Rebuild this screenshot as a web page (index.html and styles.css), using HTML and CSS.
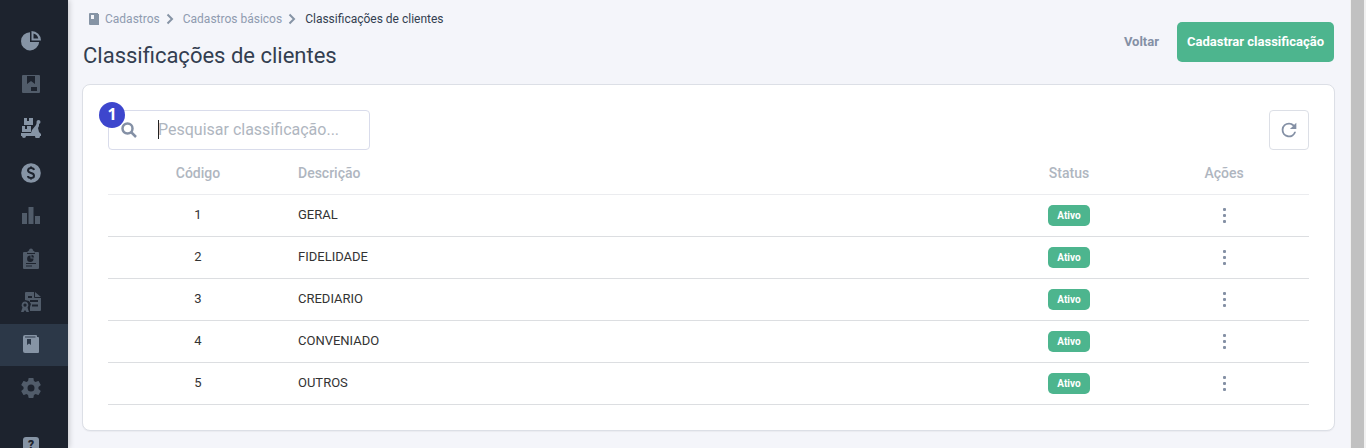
FILE: index.html
```html
<!DOCTYPE html>
<html lang="pt-BR">
<head>
    <meta charset="UTF-8">
    <meta name="viewport" content="width=device-width, initial-scale=1.0">
    <title>Classificações de clientes</title>
    <link rel="stylesheet" href="styles.css">
</head>
<body>
    <nav class="sidebar" aria-label="Menu principal">
        <div class="menu-group">
            <a href="#" class="menu-item bright" aria-label="Dashboard">
                <svg width="22" height="22" viewBox="0 0 22 22"><path d="M10 2.200V12h9.200A9.100 9.100 0 1 1 10 2.200Z"/><path fill-rule="evenodd" d="M11.500 1a9.500 9.500 0 0 1 9.500 9.500h-9.500ZM13.500 3.500V8.500h4.800a6.500 6.500 0 0 0-4.800-5Z"/></svg>
            </a>
            <a href="#" class="menu-item" aria-label="Produtos">
                <svg width="22" height="22" viewBox="0 0 22 22"><path fill-rule="evenodd" d="M3 2h16q1 0 1 1v16q0 1-1 1H3q-1 0-1-1V3q0-1 1-1ZM7 3v8l4-3 4 3V3ZM11 14v4h6v-4Z"/></svg>
            </a>
            <a href="#" class="menu-item bright" aria-label="Entregas">
                <svg width="22" height="22" viewBox="0 0 22 22"><path d="M4 2h3v3h2V2h4v7H4ZM2 10h3v3h2v-3h4v6H2ZM1 17h10l1-3 4-5 1-3h2v4l-1 2 1 4 2 2v2h-1a2.500 2.500 0 0 1-5 0H6a2 2 0 0 1-4 0H1Z"/><circle cx="18.500" cy="6" r="2"/></svg>
            </a>
        </div>
        <div class="menu-group">
            <a href="#" class="menu-item bright" aria-label="Financeiro">
                <svg width="22" height="22" viewBox="0 0 22 22"><circle cx="11" cy="11" r="9.800"/><path class="cut-line" d="M14 8q-.4-2-3-2T8 8.300Q8 10.300 11 11t3 2.700Q14 16 11 16t-3-2M11 4.500v2M11 15.500v2"/></svg>
            </a>
            <a href="#" class="menu-item" aria-label="Relatórios">
                <svg width="22" height="22" viewBox="0 0 22 22"><path d="M2 8h5v11H2ZM8.500 2h5v17h-5ZM15 11h5v8h-5Z"/></svg>
            </a>
            <a href="#" class="menu-item" aria-label="Análises">
                <svg width="22" height="22" viewBox="0 0 22 22"><path d="M4 4h3v2h8V4h3q1 0 1 1v15q0 1-1 1H4q-1 0-1-1V5q0-1 1-1Z"/><path d="M7 5q0-2 2-2.500a2 2 0 0 1 4 0q2 .5 2 2.500Z"/><path class="cut" d="M10.500 7.500v3h3a3.200 3.200 0 1 1-3-3ZM11.500 6.800a3 3 0 0 1 2.700 2.700h-2.700Z"/><path class="cut-thin" d="M6 15.500h10M6 18h6"/></svg>
            </a>
            <a href="#" class="menu-item" aria-label="Fiscal">
                <svg width="22" height="22" viewBox="0 0 22 22"><path d="M6 1h8v5q0 1 1 1h6v12q0 1-1 1H10V16l1-3-2-3-4-1V2q0-1 1-1ZM15 1l6 5h-6Z"/><path class="cut-line" d="M8 6h4M10 10h8M12 14.500h6"/><path fill-rule="evenodd" d="M5 10.500a3.600 3.600 0 0 1 2.500 6L9 21H6.500L5 19l-1.500 2H1l1.500-4.500A3.600 3.600 0 0 1 5 10.500ZM5 12.500a1.600 1.600 0 1 0 .01 0Z"/></svg>
            </a>
            <a href="#" class="menu-item active" aria-label="Cadastros" aria-current="page">
                <svg width="22" height="22" viewBox="0 0 22 22"><path fill-rule="evenodd" d="M5 1h11q1 0 1 1v1h1q1 0 1 1v14q0 1-1 1H5q-2 0-2-2V3q0-2 2-2ZM5 2.500v1h10.500v-1ZM7 5v6l2-1.500L11 11V5Z"/></svg>
            </a>
            <a href="#" class="menu-item" aria-label="Configurações">
                <svg width="24" height="24" viewBox="0 0 24 24"><path d="m19.400 13 .1-1-.1-1 2.200-1.700c.2-.1.200-.4.100-.6l-2-3.500c-.1-.2-.4-.3-.6-.2l-2.500 1-1.700-1-.4-2.600c0-.2-.2-.4-.5-.4h-4c-.2 0-.5.200-.5.4L9.100 5 7.400 6 5 5c-.3-.1-.5 0-.7.200l-2 3.500c-.1.200 0 .4.200.6L4.600 11l-.1 1 .1 1-2.100 1.700c-.2.100-.3.400-.2.600l2 3.500c.2.200.4.300.7.200l2.400-1 1.700 1 .4 2.600c0 .2.300.4.500.4h4c.3 0 .5-.2.500-.4l.4-2.600 1.700-1 2.500 1c.2.100.5 0 .6-.2l2-3.500c.1-.2.100-.5-.1-.6ZM12 15.500a3.500 3.500 0 1 1 0-7 3.500 3.500 0 0 1 0 7Z"/></svg>
            </a>
        </div>
        <div class="menu-group menu-help">
            <a href="#" class="menu-item bright" aria-label="Ajuda"><span class="help-icon">?</span></a>
        </div>
    </nav>

    <main class="content">
        <header class="page-header">
            <div>
                <nav class="breadcrumb" aria-label="Você está em">
                    <a href="#">
                        <svg width="12" height="12" viewBox="0 0 12 12"><path fill-rule="evenodd" d="M2 0h8v1h1v11H2q-1 0-1-1V1q0-1 1-1ZM3 2v4h3V2Z"/></svg>
                        Cadastros</a>
                    <svg class="chevron" width="8" height="12" viewBox="0 0 8 12"><path d="m1.500 1.500 4.500 4.500-4.500 4.500"/></svg>
                    <a href="#">Cadastros básicos</a>
                    <svg class="chevron" width="8" height="12" viewBox="0 0 8 12"><path d="m1.500 1.500 4.500 4.500-4.500 4.500"/></svg>
                    <span>Classificações de clientes</span>
                </nav>
                <h1>Classificações de clientes</h1>
            </div>
            <div class="actions">
                <button type="button" class="btn-link">Voltar</button>
                <button type="button" class="btn-primary">Cadastrar classificação</button>
            </div>
        </header>

        <section class="card">
            <div class="toolbar">
                <div class="search">
                    <span class="step-badge">1</span>
                    <svg class="search-icon" width="16" height="16" viewBox="0 0 16 16"><circle cx="6.500" cy="6.500" r="5"/><path d="m10 10 5 5"/></svg>
                    <span class="caret"></span>
                    <input type="text" id="search" placeholder="Pesquisar classificação..." aria-label="Pesquisar classificação">
                </div>
                <button type="button" class="btn-refresh" aria-label="Atualizar">
                    <svg width="22" height="22" viewBox="0 0 24 24"><path d="M17.650 6.350A7.960 7.960 0 0 0 12 4a8 8 0 1 0 7.730 10h-2.080A6 6 0 1 1 12 6c1.660 0 3.140.69 4.220 1.780L13 11h7V4z"/></svg>
                </button>
            </div>

            <table>
                <thead>
                    <tr>
                        <th class="col-code">Código</th>
                        <th class="col-desc">Descrição</th>
                        <th class="col-status">Status</th>
                        <th class="col-actions">Ações</th>
                    </tr>
                </thead>
                <tbody>
                    <tr>
                        <td class="col-code">1</td>
                        <td class="col-desc">GERAL</td>
                        <td class="col-status"><span class="status">Ativo</span></td>
                        <td class="col-actions"><button type="button" class="btn-more" aria-label="Ações de GERAL"><i></i><i></i><i></i></button></td>
                    </tr>
                    <tr>
                        <td class="col-code">2</td>
                        <td class="col-desc">FIDELIDADE</td>
                        <td class="col-status"><span class="status">Ativo</span></td>
                        <td class="col-actions"><button type="button" class="btn-more" aria-label="Ações de FIDELIDADE"><i></i><i></i><i></i></button></td>
                    </tr>
                    <tr>
                        <td class="col-code">3</td>
                        <td class="col-desc">CREDIARIO</td>
                        <td class="col-status"><span class="status">Ativo</span></td>
                        <td class="col-actions"><button type="button" class="btn-more" aria-label="Ações de CREDIARIO"><i></i><i></i><i></i></button></td>
                    </tr>
                    <tr>
                        <td class="col-code">4</td>
                        <td class="col-desc">CONVENIADO</td>
                        <td class="col-status"><span class="status">Ativo</span></td>
                        <td class="col-actions"><button type="button" class="btn-more" aria-label="Ações de CONVENIADO"><i></i><i></i><i></i></button></td>
                    </tr>
                    <tr>
                        <td class="col-code">5</td>
                        <td class="col-desc">OUTROS</td>
                        <td class="col-status"><span class="status">Ativo</span></td>
                        <td class="col-actions"><button type="button" class="btn-more" aria-label="Ações de OUTROS"><i></i><i></i><i></i></button></td>
                    </tr>
                </tbody>
            </table>
        </section>
    </main>
    <div class="scroll-track"></div>
</body>
</html>
```
FILE: styles.css
```css
* {
    box-sizing: border-box;
}

body {
    margin: 0;
    display: flex;
    height: 100vh;
    overflow: hidden;
    background-color: #f4f5fa;
    font-family: Roboto, sans-serif;
    color: #333e50;
}

button {
    font-family: inherit;
    cursor: pointer;
}

/* Sidebar */
.sidebar {
    flex: none;
    width: 68px;
    padding-top: 20px;
    overflow: hidden;
    background-color: #1d232e;
    box-shadow: 1px 0 6px rgba(0, 0, 0, 0.2);
}

.menu-group {
    display: flex;
    flex-direction: column;
    gap: 1px;
    margin-bottom: 4px;
}

.menu-item {
    display: flex;
    align-items: center;
    justify-content: center;
    height: 42px;
    padding-right: 6px;
    color: #515c6a;
    text-decoration: none;
}

.menu-item svg {
    fill: currentColor;
}

.menu-item.bright {
    color: #8694a5;
}

.menu-item.active {
    color: #8694a5;
    background-color: #2c3848;
}

.menu-item .cut {
    fill: #1d232e;
}

.menu-item .cut-line {
    fill: none;
    stroke: #1d232e;
    stroke-width: 2;
}

.menu-item .cut-thin {
    fill: none;
    stroke: #1d232e;
    stroke-width: 1;
}

.menu-help {
    margin-top: 16px;
}

.help-icon {
    width: 16px;
    height: 18px;
    border-radius: 3px;
    background-color: #8694a5;
    color: #1d232e;
    font-size: 12px;
    font-weight: 900;
    line-height: 16px;
    text-align: center;
}

/* Page header */
.content {
    flex: 1;
    min-width: 0;
    padding: 11px 15px 16px 14px;
    overflow: hidden;
}

.page-header {
    display: flex;
    justify-content: space-between;
    align-items: flex-start;
    height: 73px;
    padding-right: 1px;
}

.breadcrumb {
    display: flex;
    align-items: center;
    height: 16px;
    padding-left: 6px;
    font-size: 12px;
}

.breadcrumb a {
    display: flex;
    align-items: center;
    gap: 5px;
    color: #8f9bb0;
    text-decoration: none;
}

.breadcrumb a svg {
    fill: #8694a5;
}

.chevron {
    margin: 0 9px 0 6px;
    fill: none;
    stroke: #8694a5;
    stroke-width: 2;
}

h1 {
    margin: 16px 0 0 1px;
    font-size: 22px;
    font-weight: 400;
    line-height: 26px;
}

.actions {
    display: flex;
    gap: 8px;
    padding-top: 11px;
}

.btn-link,
.btn-primary {
    height: 40px;
    padding: 0 10px 2px;
    border: 0;
    border-radius: 5px;
    font-size: 13px;
    font-weight: 700;
}

.btn-link {
    background: none;
    color: #8490a5;
}

.btn-primary {
    background-color: #4db58e;
    color: #fff;
}

/* Card */
.card {
    padding: 25px;
    border: 1px solid #dcdfe6;
    border-radius: 8px;
    background-color: #fff;
    box-shadow: 0 1px 1px rgba(0, 0, 0, 0.04);
}

.toolbar {
    display: flex;
    justify-content: space-between;
}

.search {
    position: relative;
    width: 262px;
}

.search input {
    width: 100%;
    height: 40px;
    padding: 0 12px 2px 49px;
    border: 1px solid #d9dceb;
    border-radius: 4px;
    outline: none;
    font-family: inherit;
    font-size: 16px;
    color: #333e50;
}

.search input::placeholder {
    color: #afb6c0;
}

.search-icon {
    position: absolute;
    top: 12px;
    left: 13px;
    fill: none;
    stroke: #8490a5;
    stroke-width: 2.5;
}

.caret {
    position: absolute;
    top: 10px;
    left: 50px;
    width: 1px;
    height: 19px;
    background-color: #222;
}

.step-badge {
    position: absolute;
    top: -8px;
    left: -9px;
    z-index: 1;
    width: 26px;
    height: 26px;
    border-radius: 50%;
    background-color: #3d46cd;
    color: #fff;
    font-family: "Open Sans", sans-serif;
    font-size: 16px;
    font-weight: 700;
    line-height: 24px;
    text-align: center;
}

.btn-refresh {
    display: flex;
    align-items: center;
    justify-content: center;
    width: 40px;
    height: 40px;
    padding: 0;
    border: 1px solid #dcdfe6;
    border-radius: 4px;
    background-color: #fff;
}

.btn-refresh svg {
    fill: #8490a5;
}

/* Table */
table {
    width: 100%;
    border-collapse: collapse;
    table-layout: fixed;
}

th,
td {
    height: 42px;
    padding: 0 0 2px;
    border-bottom: 1px solid #dcdee1;
    font-size: 13px;
    font-weight: 400;
    color: #333;
    text-align: center;
}

th {
    height: 44px;
    padding: 2px 0 0;
    border-bottom-color: #ebecef;
    font-size: 14px;
    font-weight: 500;
    color: #afb6c0;
}

.col-code {
    width: 180px;
}

.col-desc {
    padding-left: 10px;
    text-align: left;
}

.col-status {
    width: 140px;
}

.col-actions {
    width: 170px;
}

td.col-status,
td.col-actions {
    padding: 0;
}

.status {
    display: block;
    width: 42px;
    height: 21px;
    margin: 0 auto;
    border-radius: 5px;
    background-color: #4db58e;
    color: #fff;
    font-size: 10px;
    font-weight: 700;
    line-height: 21px;
}

.btn-more {
    display: flex;
    flex-direction: column;
    align-items: center;
    gap: 3px;
    margin: 0 auto;
    padding: 3px 8px;
    border: 0;
    background: none;
}

.btn-more i {
    width: 3px;
    height: 3px;
    border-radius: 1px;
    background-color: #8490a5;
}

.scroll-track {
    flex: none;
    width: 16px;
    border: solid #f1f1f1;
    border-width: 0 2px 0 1px;
    background-color: #c1c1c1;
}
```
